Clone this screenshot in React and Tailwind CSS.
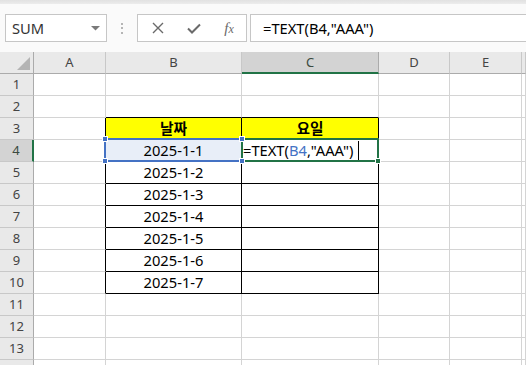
import React from "react";

const COLS = [
  { key: "A", w: "w-[72px]" },
  { key: "B", w: "w-[136px]" },
  { key: "C", w: "w-[137px]" },
  { key: "D", w: "w-[71px]" },
  { key: "E", w: "w-[72px]" },
  { key: "F", w: "flex-1" },
];

const DATES = {
  5: "2025-1-2",
  6: "2025-1-3",
  7: "2025-1-4",
  8: "2025-1-5",
  9: "2025-1-6",
  10: "2025-1-7",
};

function inTable(r, c) {
  return r >= 3 && r <= 10 && (c === "B" || c === "C");
}

function Cell({ r, c, w }) {
  const nextCol = { A: "B", B: "C", C: "D", D: "E", E: "F", F: "G" }[c];
  const rBlack = inTable(r, c) || inTable(r, nextCol);
  const bBlack = inTable(r, c) || inTable(r + 1, c);
  const rCls = rBlack ? "border-r-black" : "border-r-[#d4d4d4]";
  const bCls = bBlack ? "border-b-black" : "border-b-[#d4d4d4]";
  let bg = "bg-white";
  let content = null;
  if (r === 3 && (c === "B" || c === "C")) {
    bg = "bg-[#ffff00]";
    content = (
      <span className="font-bold text-[14.7px] text-black">
        {c === "B" ? "날짜" : "요일"}
      </span>
    );
  } else if (r === 4 && c === "B") {
    bg = "bg-[#e8eef8]";
    content = <span className="text-[14.7px] text-black">2025-1-1</span>;
  } else if (c === "B" && DATES[r]) {
    content = <span className="text-[14.7px] text-black">{DATES[r]}</span>;
  }
  if (r === 4 && c === "C") {
    return (
      <div
        className={`${w} shrink-0 h-full border-r border-b ${rCls} ${bCls} bg-white flex items-center pl-[1px] text-[14.7px] text-black whitespace-nowrap overflow-visible`}
      >
        <span>=TEXT(</span>
        <span className="text-[#4472c4]">B4</span>
        <span>,"AAA")</span>
      </div>
    );
  }
  return (
    <div
      className={`${w} ${c === "F" ? "" : "shrink-0"} h-full border-r border-b ${rCls} ${bCls} ${bg} flex items-center justify-center`}
    >
      {content}
    </div>
  );
}

export default function App() {
  const rows = Array.from({ length: 14 }, (_, i) => i + 1);
  return (
    <div className="w-[526px] h-[365px] overflow-hidden bg-white relative font-['Noto_Sans','Noto_Sans_CJK_KR',sans-serif] leading-none">
      {/* Toolbar */}
      <div className="h-[52px] flex flex-col bg-[#fafafa]">
        <div className="h-[4px] bg-gradient-to-b from-[#e1e1e1] to-[#ececec]" />
        <div className="flex items-start pt-[10px]">
          <div className="shrink-0 ml-[5px] w-[102px] h-[28px] border border-[#c6c6c6] bg-white flex items-center pl-[6px] pr-[6px] justify-between">
            <span className="text-[14.7px] text-[#333]">SUM</span>
            <svg width="9" height="5" viewBox="0 0 9 5">
              <path d="M0 0 L9 0 L4.5 4.5 Z" fill="#7a7a7a" />
            </svg>
          </div>
          <div className="shrink-0 w-[30px] h-[28px] flex flex-col items-center justify-center gap-[2.5px]">
            <div className="w-[2px] h-[2px] bg-[#b5b5b5]" />
            <div className="w-[2px] h-[2px] bg-[#b5b5b5]" />
            <div className="w-[2px] h-[2px] bg-[#b5b5b5]" />
          </div>
          <div className="shrink-0 w-[110px] h-[28px] border border-[#c6c6c6] bg-white flex items-center">
            <div className="w-[38px] flex justify-center pl-[2px]">
              <svg width="12" height="12" viewBox="0 0 12 12">
                <path d="M1 1 L11 11 M11 1 L1 11" stroke="#6a6a6a" strokeWidth="1.4" fill="none" />
              </svg>
            </div>
            <div className="w-[36px] flex justify-center">
              <svg width="14" height="11" viewBox="0 0 14 11">
                <path d="M1 5.5 L5 9.5 L13 1.5" stroke="#6a6a6a" strokeWidth="2" fill="none" />
              </svg>
            </div>
            <div className="w-[34px] flex justify-center">
              <span className="font-['Liberation_Serif',serif] italic text-[15px] text-[#6a6a6a]">
                f<span className="text-[12px]">x</span>
              </span>
            </div>
          </div>
          <div className="shrink-0 ml-[3px] w-[290px] h-[28px] border border-[#c6c6c6] bg-white flex items-center pl-[12px] text-[14.7px] text-black whitespace-nowrap">
            =TEXT(B4,"AAA")
          </div>
        </div>
      </div>

      {/* Grid */}
      <div className="relative">
        {/* Column header */}
        <div className="flex h-[22px]">
          <div className="shrink-0 w-[34px] h-full border-r border-b border-[#ababab] bg-[#e9e9e9] flex items-end justify-end pr-[3px] pb-[3px]">
            <svg width="13" height="13" viewBox="0 0 13 13">
              <path d="M13 0 L13 13 L0 13 Z" fill="#b4b4b4" />
            </svg>
          </div>
          {COLS.map((c) => (
            <div
              key={c.key}
              className={`${c.w} ${c.key === "F" ? "" : "shrink-0"} h-full border-r flex items-center justify-center text-[13px] ${
                c.key === "C"
                  ? "bg-[#d3d3d3] border-r-[#ababab] border-b-2 border-b-[#217346] text-[#3b4a40]"
                  : "bg-[#e9e9e9] border-r-[#c8c8c8] border-b border-b-[#ababab] text-[#444]"
              }`}
            >
              {c.key === "F" ? "" : c.key}
            </div>
          ))}
        </div>

        {rows.map((r) => (
          <div key={r} className="flex h-[22px]">
            <div
              className={`shrink-0 w-[34px] h-full border-b flex items-center justify-center text-[13px] ${
                r === 4
                  ? "bg-[#d3d3d3] border-r-2 border-r-[#217346] border-b-[#c8c8c8] text-[#3b4a40]"
                  : "bg-[#e9e9e9] border-r border-r-[#ababab] border-b-[#c8c8c8] text-[#444]"
              }`}
            >
              {r}
            </div>
            {COLS.map((c) => (
              <Cell key={c.key} r={r} c={c.key} w={c.w} />
            ))}
          </div>
        ))}

        {/* Selection overlays */}
        <div className="absolute left-[104px] top-[86px] w-[139px] h-[24px] border-2 border-[#4472c4]" />
        <div className="absolute left-[241px] top-[86px] w-[138px] h-[24px] border-2 border-[#217346]" />
        <div className="absolute left-[358px] top-[89px] w-[1px] h-[19px] bg-black" />
        <div className="absolute left-[102px] top-[84px] w-[6px] h-[6px] bg-[#4472c4] border border-white" />
        <div className="absolute left-[102px] top-[106px] w-[6px] h-[6px] bg-[#4472c4] border border-white" />
        <div className="absolute left-[239px] top-[84px] w-[6px] h-[6px] bg-[#4472c4] border border-white" />
        <div className="absolute left-[239px] top-[106px] w-[6px] h-[6px] bg-[#4472c4] border border-white" />
        <div className="absolute left-[375px] top-[106px] w-[6px] h-[6px] bg-[#217346] border border-white" />
      </div>
    </div>
  );
}
